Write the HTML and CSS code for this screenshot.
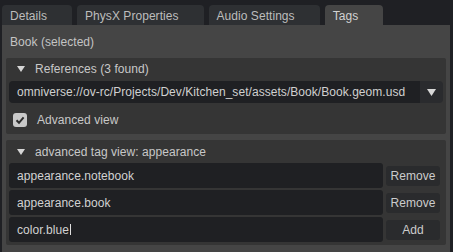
FILE: index.html
```html
<!DOCTYPE html>
<html lang="en">
<head>
    <meta charset="UTF-8">
    <meta name="viewport" content="width=device-width, initial-scale=1.0">
    <title>Tags</title>
    <link rel="stylesheet" href="styles.css">
</head>
<body>
    <div class="tabs">
        <div class="tab">Details</div>
        <div class="tab">PhysX Properties</div>
        <div class="tab">Audio Settings</div>
        <div class="tab active">Tags</div>
    </div>

    <div class="panel">
        <div class="title">Book (selected)</div>

        <div class="frame">
            <div class="frame-head">
                <svg class="arrow" width="8" height="6" viewBox="0 0 8 6"><polygon points="0,0 8,0 4,6"/></svg>
                References (3 found)
            </div>
            <div class="combo">
                <div class="combo-text">omniverse://ov-rc/Projects/Dev/Kitchen_set/assets/Book/Book.geom.usd</div>
                <div class="combo-btn">
                    <svg width="9" height="7" viewBox="0 0 9 7"><polygon points="0,0 9,0 4.5,7"/></svg>
                </div>
            </div>
            <div class="check-row">
                <span class="checkbox">
                    <svg width="14" height="14" viewBox="0 0 14 14"><path d="M3.5 7.3 L6 9.8 L10.6 4.4" /></svg>
                </span>
                Advanced view
            </div>
        </div>

        <div class="frame tags">
            <div class="frame-head tall">
                <svg class="arrow" width="8" height="6" viewBox="0 0 8 6"><polygon points="0,0 8,0 4,6"/></svg>
                advanced tag view: appearance
            </div>
            <div class="tag-row">
                <div class="tag-field">appearance.notebook</div>
                <button class="tag-btn">Remove</button>
            </div>
            <div class="tag-row">
                <div class="tag-field">appearance.book</div>
                <button class="tag-btn">Remove</button>
            </div>
            <div class="tag-row">
                <div class="tag-field">color.blue<span class="caret"></span></div>
                <button class="tag-btn">Add</button>
            </div>
        </div>
    </div>
</body>
</html>
```

FILE: styles.css
```css
body {
    margin: 0;
    width: 453px;
    height: 252px;
    overflow: hidden;
    background-color: #1f2024;
    font-family: "Liberation Sans", Arial, sans-serif;
    font-size: 12px;
    letter-spacing: 0.05px;
    color: #cccccc;
}

.tabs {
    display: flex;
    gap: 5px;
    padding: 5px 0 0 2px;
}
.tab {
    height: 20px;
    box-sizing: border-box;
    padding: 1px 25px 0 8px;
    display: flex;
    align-items: center;
    background-color: #2e3033;
    border-radius: 4px 4px 0 0;
    color: #bdbdbd;
}
.tab.active {
    background-color: #454545;
    color: #d2d2d2;
}

.panel {
    margin-left: 2px;
    width: 448px;
    height: 227px;
    box-sizing: border-box;
    padding: 0 4px;
    background-color: #454545;
}
.title {
    height: 33px;
    display: flex;
    align-items: center;
    padding-left: 4px;
    color: #c4c4c4;
}

.frame {
    background-color: #353535;
    border-radius: 2px;
    padding: 0 3px;
}
.frame.tags {
    margin-top: 6px;
    padding-bottom: 1px;
}
.frame-head {
    height: 21px;
    display: flex;
    align-items: center;
    color: #c8c8c8;
}
.frame-head.tall {
    height: 23px;
}
.arrow {
    fill: #d6d6d6;
    margin: 0 10px 0 8px;
}

.combo {
    display: flex;
    height: 22px;
    margin-top: 2px;
    border-radius: 4px;
    overflow: hidden;
}
.combo-text {
    flex: 1;
    display: flex;
    align-items: center;
    padding-left: 8px;
    background-color: #1f2023;
    color: #d0d0d0;
    white-space: nowrap;
}
.combo-btn {
    width: 23px;
    display: flex;
    align-items: center;
    justify-content: center;
    background-color: #2a2b2e;
}
.combo-btn svg {
    fill: #d8d8d8;
}

.check-row {
    height: 31px;
    box-sizing: border-box;
    padding-top: 3px;
    display: flex;
    align-items: center;
    color: #c8c8c8;
}
.checkbox {
    width: 14px;
    height: 14px;
    margin: 0 10px 0 4px;
    background-color: #c9c9c9;
    border-radius: 3px;
}
.checkbox svg {
    display: block;
    fill: none;
    stroke: #2c2c2c;
    stroke-width: 2;
}

.tag-row {
    display: flex;
    align-items: center;
    gap: 3px;
    height: 25px;
    margin-bottom: 2px;
}
.tag-field {
    width: 374px;
    height: 25px;
    box-sizing: border-box;
    padding-left: 8px;
    display: flex;
    align-items: center;
    background-color: #1f2023;
    border-radius: 3px;
    color: #d2d2d2;
}
.caret {
    width: 1px;
    height: 11px;
    margin-left: 1px;
    background-color: #e0e0e0;
}
.tag-btn {
    width: 54px;
    height: 20px;
    padding: 0;
    border: none;
    border-radius: 3px;
    background-color: #2a2b2d;
    color: #cccccc;
    font-family: inherit;
    font-size: 12px;
    letter-spacing: inherit;
}
```
